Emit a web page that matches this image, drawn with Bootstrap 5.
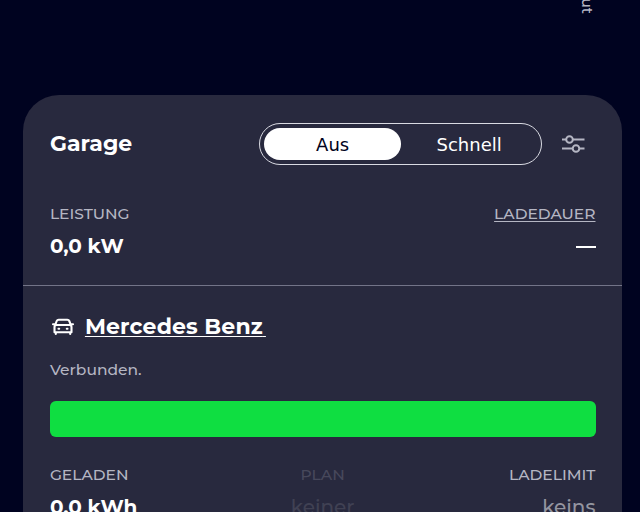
<!DOCTYPE html>
<html lang="de" data-bs-theme="dark">
<head>
<meta charset="utf-8">
<meta name="viewport" content="width=device-width, initial-scale=1">
<title>Garage</title>
<link href="https://cdn.jsdelivr.net/npm/bootstrap@5.3.0/dist/css/bootstrap.min.css" rel="stylesheet">
<style>
  body { background: #000320; font-family: Montserrat, Inter, sans-serif; height: 512px; color: #fff; line-height: 24px; }
  .axis { height: 95px; padding-right: 43px; }
  .axis-label { writing-mode: vertical-rl; height: 14px; font-size: 14.5px; font-weight: 500; line-height: 20px; color: #b5b6c3; }
  .loadpoint { background: #28293e; margin: 0 18px 0 23.4px; height: 417px; border-radius: 36px 36px 0 0; padding-top: 28px; }
  .inset { padding: 0 26.5px; }
  .power { padding-top: 37px; }
  .vehicle-section { padding-top: 29px; }
  .title { font-size: 22px; line-height: 24px; font-weight: 700; letter-spacing: .05px; }
  .vehicle-row { height: 24px; }
  .vehicle { letter-spacing: .17px; white-space: pre; margin-left: 9px; }
  .vehicle span { font-size: 10px; line-height: 1; }
  .mode { width: 283px; height: 42px; border: 1px solid #d9dae2; padding: 4px; margin-right: 18.5px; }
  .mode .btn { --bs-btn-border-width: 0; --bs-btn-padding-y: 0; --bs-btn-font-family: "DejaVu Sans", sans-serif; font-size: 18px; font-weight: 400; line-height: 33px; color: #fff; }
  .mode .btn.active { background: #fff; color: #000320; }
  .settings { color: #b5b6c3; margin-right: 10.6px; }
  .caption-text { font-size: 15.5px; font-weight: 500; color: #b5b6c3; }
  .amount { font-size: 20px; font-weight: 700; margin-top: 8px; }
  .plain { font-weight: 500; color: #9495a0; }
  .dim { opacity: .22; }
  .underlined { text-decoration: underline; text-decoration-thickness: 1px; text-underline-offset: 2px; }
  .divider { height: 1px; background: #737488; margin-top: 27px; }
  .state { font-size: 15.5px; font-weight: 500; color: #b5b6c3; margin-top: 19px; }
  .charge { height: 36px; border-radius: 6px; margin-top: 19px; --bs-progress-bar-bg: #0fde41; }
  .stats { padding-top: 26px; }
  .dash { width: 20px; height: 2px; background: #fff; margin-top: 20px; }
</style>
</head>
<body class="overflow-hidden">
<div class="axis d-flex justify-content-end align-items-start"><span class="axis-label d-flex justify-content-end text-nowrap"><span>ut</span></span></div>
<main class="loadpoint overflow-hidden">
  <header class="inset d-flex align-items-center">
    <h1 class="title m-0 me-auto">Garage</h1>
    <div class="mode d-flex rounded-pill" role="group">
      <button class="btn active rounded-pill flex-fill w-50">Aus</button>
      <button class="btn rounded-pill flex-fill w-50">Schnell</button>
    </div>
    <svg class="settings" width="24" height="20" viewBox="0 0 24 20" fill="none" stroke="currentColor" stroke-width="2"><path d="M1 5.500h4M12 5.500h11.500M1 14.500h10.500M18.500 14.500h5"/><circle cx="8.500" cy="5.500" r="3.300"/><circle cx="15" cy="14.500" r="3.300"/></svg>
  </header>
  <section class="inset power d-flex justify-content-between">
    <div><div class="caption-text">LEISTUNG</div><div class="amount">0,0 kW</div></div>
    <div class="d-flex flex-column align-items-end"><div class="caption-text underlined">LADEDAUER</div><div class="dash"></div></div>
  </section>
  <div class="divider"></div>
  <section class="inset vehicle-section">
    <div class="vehicle-row d-flex align-items-center">
      <svg width="26" height="20" viewBox="0 0 26 20" fill="none" stroke="#fff" stroke-width="2.100" stroke-linejoin="round" stroke-linecap="round"><path d="M5 8.500 6.700 4Q7.200 2.700 8.700 2.700h8.600Q18.800 2.700 19.300 4L21 8.500M3 7.200h2M21 7.200h2M6.500 8h13Q21.500 8 21.500 10v5.200h-17V10Q4.500 8 6.500 8ZM5.800 15.500V17M20.200 15.500V17"/><path d="M8.500 11.700h.7M16.800 11.700h.7"/></svg>
      <a class="title vehicle underlined text-white" href="#">Mercedes Benz<span> </span></a>
    </div>
    <div class="state">Verbunden.</div>
    <div class="progress charge"><div class="progress-bar" style="width:100%"></div></div>
    <div class="row g-0 stats">
      <div class="col-4"><div class="caption-text">GELADEN</div><div class="amount">0,0 kWh</div></div>
      <div class="col-4 text-center dim"><div class="caption-text">PLAN</div><div class="amount plain">keiner</div></div>
      <div class="col-4 text-end"><div class="caption-text">LADELIMIT</div><div class="amount plain">keins</div></div>
    </div>
  </section>
</main>
<script src="https://cdn.jsdelivr.net/npm/bootstrap@5.3.0/dist/js/bootstrap.bundle.min.js"></script>
</body>
</html>
